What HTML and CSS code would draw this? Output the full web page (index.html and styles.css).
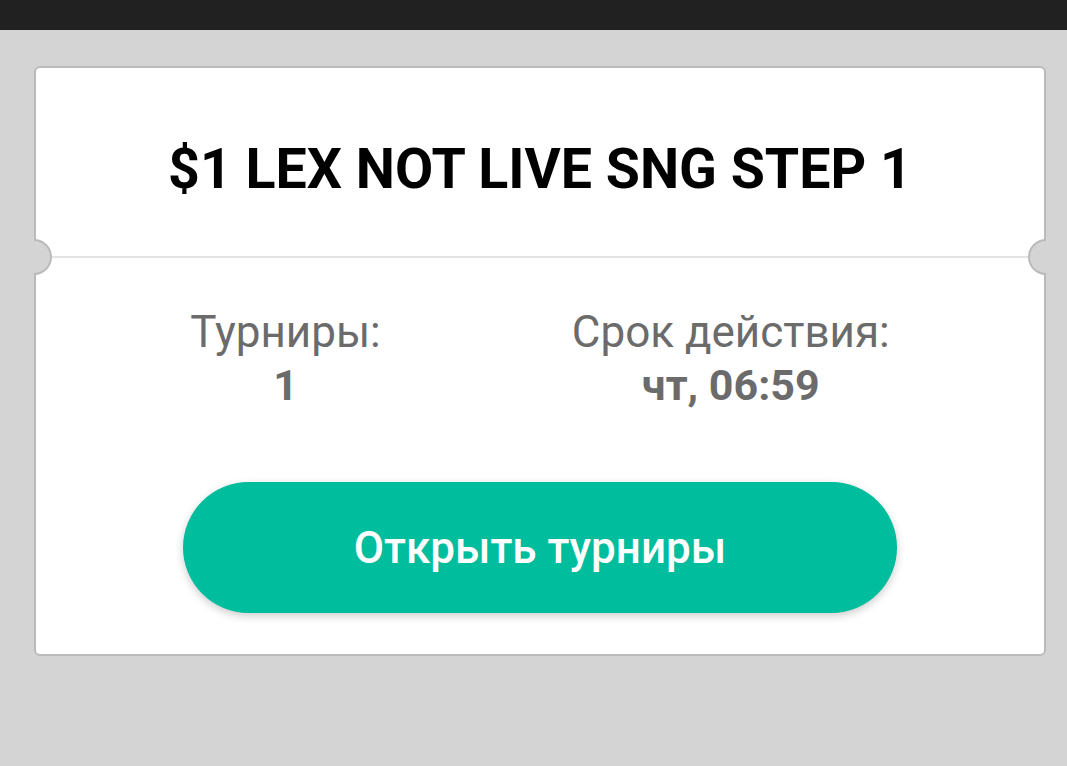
FILE: index.html
```html
<!DOCTYPE html>
<html lang="ru">
<head>
<meta charset="UTF-8">
<title>Билет</title>
<link rel="stylesheet" href="styles.css">
</head>
<body>
    <div class="status-bar"></div>
    <div class="page">
        <div class="ticket">
            <div class="ticket-head">
                <h1>$1 LEX NOT LIVE SNG STEP 1</h1>
            </div>
            <div class="ticket-split">
                <span class="notch notch-left"></span>
                <span class="notch notch-right"></span>
            </div>
            <div class="ticket-body">
                <div class="info">
                    <div class="info-item">
                        <div class="info-label">Турниры:</div>
                        <div class="info-value">1</div>
                    </div>
                    <div class="info-item">
                        <div class="info-label">Срок действия:</div>
                        <div class="info-value">чт, 06:59</div>
                    </div>
                </div>
                <button type="button" class="open-btn">Открыть турниры</button>
            </div>
        </div>
    </div>
</body>
</html>
```

FILE: styles.css
```css
body {
    margin: 0;
    font-family: Roboto, "Liberation Sans", sans-serif;
    background-color: #d4d4d4;
    height: 766px;
}
.status-bar {
    height: 30px;
    background: #212121;
}
.page {
    padding: 36px 21px 0 34px;
}
.ticket {
    background: white;
    border: 2px solid #bababa;
    border-radius: 6px;
}
.ticket-head {
    height: 188px;
    display: flex;
    align-items: center;
    justify-content: center;
}
.ticket-head h1 {
    margin: 0;
    font-size: 55.5px;
    font-weight: 700;
    color: #000;
    padding-top: 14px;
}
.ticket-split {
    position: relative;
    height: 2px;
    background: #e4e4e4;
}
.notch {
    position: absolute;
    top: -17px;
    width: 16px;
    height: 32px;
    background: #d4d4d4;
    border: 2px solid #bababa;
}
.notch-left {
    left: -2px;
    border-left: none;
    border-radius: 0 18px 18px 0;
}
.notch-right {
    right: -2px;
    border-right: none;
    border-radius: 18px 0 0 18px;
}
.ticket-body {
    height: 396px;
    display: flex;
    flex-direction: column;
    align-items: center;
}
.info {
    display: flex;
    justify-content: center;
    gap: 191px;
    margin-top: 48px;
    color: #6b6b6b;
    text-align: center;
}
.info-label {
    font-size: 44px;
    line-height: 52px;
}
.info-value {
    font-size: 43px;
    font-weight: 700;
    line-height: 52px;
    margin-top: 1px;
}
.open-btn {
    margin-top: 71px;
    width: 714px;
    height: 131px;
    border: none;
    border-radius: 66px;
    background: #00bd9d;
    color: white;
    font-family: Roboto, "Liberation Sans", sans-serif;
    font-size: 44px;
    font-weight: 500;
    box-shadow: 0 3px 8px rgba(0,0,0,0.2);
}
```
